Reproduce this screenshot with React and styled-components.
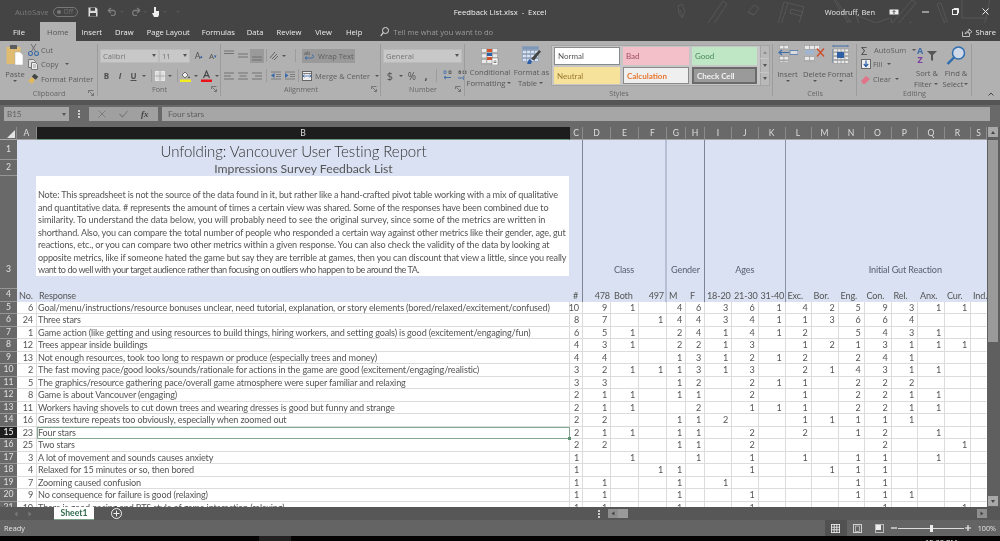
import React from "react";
import styled, { createGlobalStyle } from "styled-components";

const Global = createGlobalStyle`
  html, body { margin: 0; padding: 0; background: #000; overflow: hidden; }
  #root { width: 1000px; height: 541px; overflow: hidden; }
  * { box-sizing: border-box; }
`;

const UI = `"Open Sans", "Noto Sans", sans-serif`;
const CELL = `Lato, "Open Sans", sans-serif`;

const Window = styled.div`
  width: 1000px; height: 541px; display: flex; flex-direction: column;
  font-family: ${UI}; background: #444; filter: blur(0.35px); overflow: hidden;
`;
const Gap = styled.span`width: ${p => p.$w}px; flex: none;`;

/* ---------- title bar ---------- */
const TitleBar = styled.div`
  position: relative; height: 23px; background: #444; color: #eee; font-size: 8px;
  display: grid; grid-template-columns: 1fr auto 1fr; align-items: center;
`;
const Doodles = styled.svg`position: absolute; left: 660px; top: 0; pointer-events: none;`;
const Qat = styled.div`display: flex; align-items: center; padding-left: 15px;`;
const AutoSave = styled.span`color: #7a7a7a; font-size: 7.7px; margin-right: 4px;`;
const OffToggle = styled.span`
  display: inline-flex; align-items: center; gap: 3px; width: 25px; height: 10px; border: 1px solid #777;
  border-radius: 6px; color: #777; font-size: 6.5px; padding-left: 3px; margin-right: 10px;
  &::before { content: ""; width: 4px; height: 4px; border-radius: 50%; background: #777; }
`;
const DocTitle = styled.div`font-size: 7.7px; color: #f0f0f0; white-space: pre;`;
const TitleRight = styled.div`display: flex; align-items: center; justify-content: flex-end; z-index: 1;`;
const UserName = styled.span`font-size: 7.45px; color: #e8e8e8; margin-right: 14px;`;
const WinBtns = styled.div`display: flex; align-items: center; gap: 23px; padding-right: 11px;`;

const TabBar = styled.div`
  position: relative; height: 18px; background: #444; display: flex; align-items: flex-end; padding-left: 4px;
`;
const Tab = styled.div`
  height: 19px; display: flex; align-items: center; justify-content: center; padding: 0 ${p => p.$pad ?? 7}px;
  margin-right: ${p => p.$mr ?? 0}px;
  font-size: 7.6px; color: ${p => (p.$active ? "#555" : "#eee")}; background: ${p => (p.$active ? "#b1b1b1" : "transparent")};
  white-space: nowrap;
`;
const TellMe = styled.div`display: flex; align-items: center; gap: 4px; margin-left: 11px; height: 18px; color: #9a9a9a; font-size: 7.6px;`;
const Share = styled.div`
  margin-left: auto; height: 18px; display: flex; align-items: center; gap: 4px; padding-right: 4px; color: #eee; font-size: 7.6px;
`;

/* ---------- ribbon ---------- */
const Ribbon = styled.div`height: 59px; background: #b1b1b1; display: flex; color: #505050;`;
const Group = styled.div`
  width: ${p => p.$w}px; flex: none; display: flex; flex-direction: column; position: relative;
  &::after { content: ""; position: absolute; right: 0; top: 3px; bottom: 4px; width: 1px; background: #9c9c9c; }
`;
const GroupBody = styled.div`flex: 1; display: flex; align-items: flex-start; min-height: 0; padding-left: ${p => p.$pl ?? 0}px; gap: ${p => p.$gap ?? 0}px;`;
const GroupLabel = styled.div`height: 12px; line-height: 12px; text-align: center; font-size: 7.2px; color: #666; margin-bottom: 1px; position: relative;`;
const Launcher = styled.svg`position: absolute; right: 4px; top: 3px;`;
const Big = styled.div`
  width: ${p => p.$w}px; flex: none; display: flex; flex-direction: column; align-items: center;
  font-size: 7.6px; line-height: 10.5px; padding-top: ${p => p.$pt ?? 4}px; color: #585858; white-space: nowrap;
`;
const BigIcon = styled.div`height: ${p => p.$h ?? 26}px; display: flex; align-items: flex-start; justify-content: center;`;
const Caret = styled.span`
  display: inline-block; width: 0; height: 0; border-left: 2px solid transparent; border-right: 2px solid transparent;
  border-top: 2.5px solid #555; vertical-align: middle; margin: 0 ${p => p.$m ?? 2}px; flex: none;
`;
const SmallStack = styled.div`display: flex; flex-direction: column; padding-top: ${p => p.$pt ?? 2}px; width: ${p => (p.$w ? p.$w + "px" : "auto")}; flex: none;`;
const SmallItem = styled.div`
  height: 14.3px; display: flex; align-items: center; gap: 2px; font-size: 7.5px; color: #5e5e5e; white-space: nowrap;
`;
const Sigma = styled.span`font-size: 11px; width: 11px; flex: none; color: #444; line-height: 1;`;
const Row = styled.div`height: 15px; display: flex; align-items: center; margin-bottom: ${p => p.$mb ?? 5}px;`;
const Stack = styled.div`display: flex; flex-direction: column; padding-top: 7px; padding-left: ${p => p.$pl ?? 0}px;`;
const Combo = styled.div`
  width: ${p => p.$w}px; height: 14px; background: #c8c8c8; border: 1px solid #bbb; margin-right: ${p => p.$mr ?? 0}px;
  display: flex; align-items: center; justify-content: space-between; padding: 0 2px; font-size: 7.6px; color: #747474;
`;
const IconBtn = styled.div`
  width: ${p => p.$w ?? 14}px; height: 14px; display: flex; align-items: center; justify-content: center; flex: none;
  background: ${p => (p.$on ? "#9a9a9a" : "transparent")}; font-size: ${p => p.$fs ?? 8}px; font-weight: ${p => p.$fw ?? 400};
  font-style: ${p => (p.$it ? "italic" : "normal")}; text-decoration: ${p => (p.$ul ? "underline" : "none")}; color: #505050;
`;
const Sup = styled.sup`font-size: 5px; color: #2f5fa5;`;
const VSep = styled.span`width: 1px; height: 13px; background: #9c9c9c; margin: 0 ${p => p.$m ?? 3}px; flex: none;`;
const WrapBtn = styled.div`
  width: 53px; height: 14px; background: #9a9a9a; display: flex; align-items: center; gap: 3px; padding-left: 2px; font-size: 7.5px; color: #5e5e5e; white-space: nowrap;
`;
const MergeBtn = styled.div`display: flex; align-items: center; gap: 3px; padding-left: 2px; font-size: 7.5px; color: #5e5e5e; white-space: nowrap;`;
const Gallery = styled.div`
  width: 219px; height: 41px; margin-top: 4px; background: #c6c6c6; border: 1px solid #a4a4a4; display: flex; flex: none;
`;
const StyleGrid = styled.div`flex: 1; display: grid; grid-template-columns: 69px 69px 68px; grid-template-rows: 20px 19px; gap: 0; padding-left: 1px;`;
const StyleCell = styled.div`
  margin: 1px 2px 1px 1px; display: flex; align-items: center; padding-left: 3px; font-size: 8px; white-space: nowrap;
  background: ${p => p.$bg}; color: ${p => p.$fg}; font-weight: ${p => p.$fw ?? 400};
  border: ${p => p.$bd ?? "none"}; font-family: ${CELL};
`;
const GalleryScroll = styled.div`width: 11px; display: flex; flex-direction: column; gap: 1px; margin-left: 1px;`;
const GalleryBtn = styled.div`
  flex: 1; background: #b9b9b9; display: flex; align-items: center; justify-content: center; border-left: 1px solid #a4a4a4;
`;
const Tri = styled.span`
  width: 0; height: 0; border-left: 2.5px solid transparent; border-right: 2.5px solid transparent;
  ${p => (p.$up ? `border-bottom: 3px solid ${p.$c ?? "#555"};` : `border-top: 3px solid ${p.$c ?? "#555"};`)}
  transform: rotate(${p => p.$rot ?? 0}deg);
`;
const Collapse = styled.div`flex: 1; position: relative; display: flex; align-items: flex-end; justify-content: flex-end; padding: 0 6px 4px 0;`;

/* ---------- formula bar ---------- */
const Spacer = styled.div`height: 5px; background: #555;`;
const FormulaBar = styled.div`height: 22px; background: #696969; display: flex; align-items: flex-start; padding: 2px 10px 0 4px;`;
const NameBox = styled.div`
  width: 65px; height: 14px; background: #a6a6a6; display: flex; align-items: center; justify-content: space-between;
  padding: 0 3px; font-family: ${CELL}; font-size: 8px; color: #5e5e5e;
`;
const Dots = styled.div`width: 20px; height: 14px; display: flex; align-items: center; justify-content: center;`;
const FxBox = styled.div`
  width: 69px; height: 14px; background: #a0a0a0; display: flex; align-items: center; justify-content: space-around; padding: 0 3px;
  color: #444; font-family: "Liberation Serif", serif; font-style: italic; font-weight: 700; font-size: 9px;
`;
const FormulaInput = styled.div`
  margin-left: 4px; flex: 1; height: 14px; background: #a6a6a6; display: flex; align-items: center; padding-left: 6px;
  font-family: ${CELL}; font-size: 8.4px; color: #5e5e5e;
`;

/* ---------- sheet ---------- */
const SheetArea = styled.div`height: 380px; display: flex; background: #696969;`;
const COLS = [17, 20, 533, 13, 28, 28, 28, 19, 19, 27, 26.5, 27, 26, 27, 26, 27, 26.5, 27, 26, 16];
const Sheet = styled.div`
  width: 987px; height: 380px; overflow: hidden; display: grid; flex: none;
  grid-template-columns: ${COLS.map(c => c + "px").join(" ")};
  grid-template-rows: 13px 20px 16px 113px repeat(18, 12.5px);
  grid-auto-rows: 12.5px;
  font-family: ${CELL}; font-size: 9.1px; letter-spacing: -0.15px; color: #555; background: #fff;
`;
const Corner = styled.div`
  background: #696969; position: relative; border-right: 1px solid #8a8a8a; border-bottom: 1px solid #aaa;
  &::after { content: ""; position: absolute; right: 1px; bottom: 1px; width: 8px; height: 8px; background: #e4e4e4; clip-path: polygon(100% 0, 100% 100%, 0 100%); }
`;
const ColHead = styled.div`
  display: flex; align-items: center; justify-content: center; font-size: 8.6px; overflow: hidden;
  background: ${p => (p.$sel ? "#1d1d1d" : "#696969")}; color: #ddd; letter-spacing: 0;
  border-right: 1px solid ${p => (p.$sel ? "#1d1d1d" : "#8c8c8c")};
  border-bottom: 1px solid ${p => (p.$sel ? "#6f9a82" : "#a3a3a3")};
`;
const RowHead = styled.div`
  display: flex; align-items: ${p => (p.$end ? "flex-end" : "center")}; justify-content: center; font-size: 8.6px; line-height: 1; letter-spacing: 0;
  padding-bottom: ${p => (p.$end ? "14px" : "0")};
  background: ${p => (p.$sel ? "#1d1d1d" : "#696969")}; color: ${p => (p.$sel ? "#fff" : "#e0e0e0")};
  border-bottom: 1px solid #969696; grid-column: 1;
`;
const Blank = styled.div`background: #d9e1f2; grid-column: ${p => p.$col}; grid-row: ${p => p.$row};`;
const TitleCell = styled.div`
  grid-column: 2 / 4; grid-row: 2; background: #d9e1f2; display: flex; align-items: flex-end; justify-content: center;
  font-size: 15px; font-weight: 300; color: #333; line-height: 18px; white-space: nowrap; letter-spacing: -0.06px;
`;
const SubtitleCell = styled.div`
  grid-column: 3; grid-row: 3; background: #d9e1f2; display: flex; align-items: center; justify-content: center;
  font-size: 12.2px; color: #555; white-space: nowrap; letter-spacing: 0;
`;
const NoteCell = styled.div`grid-column: 3; grid-row: 4; background: #d9e1f2; padding: 0 1px 13px 0;`;
const NoteBox = styled.div`
  background: #fff; margin-left: -1px; height: 100px; padding: 13px 0 0 2px; color: #555; line-height: 12.5px;
  overflow: hidden;
`;
const NoteLine = styled.div`white-space: nowrap; letter-spacing: ${p => p.$ls}px;`;
const Band = styled.div`
  grid-column: ${p => p.$col}; grid-row: 2 / 5; background: #d9e1f2; display: flex; align-items: flex-end; justify-content: center;
  padding: 0 0 13px ${p => p.$pl ?? 0}px; line-height: 12.5px; color: #5a6072; white-space: nowrap; font-size: 9.1px;
  border-right: ${p => p.$edge ?? "none"};
`;
const HeadCell = styled.div`
  background: #d9e1f2; display: flex; align-items: center; overflow: hidden; white-space: nowrap; padding: 0 ${p => p.$pr ?? 1}px 0 ${p => p.$pl ?? 2}px;
  justify-content: ${p => (p.$right ? "flex-end" : "flex-start")}; border-right: ${p => p.$edge ?? "none"};
`;
const Cell = styled.div`
  display: flex; align-items: center; overflow: visible; white-space: nowrap; padding: 0 3px 0 ${p => p.$pl ?? 0}px;
  justify-content: ${p => (p.$text ? "flex-start" : "flex-end")}; background: #fff;
  border-right: 1px solid ${p => (p.$noRight ? "transparent" : "#dcdcdc")}; border-bottom: 1px solid #dcdcdc; position: relative; line-height: 1;
`;
const SelCell = styled(Cell)`
  outline: 1.5px solid #86a893; outline-offset: -1px; z-index: 2;
`;
const Handle = styled.span`position: absolute; right: -2px; bottom: -2px; width: 3px; height: 3px; background: #5f8f73;`;

const VScroll = styled.div`width: 13px; flex: none; background: #5f5f5f; display: flex; flex-direction: column; padding: 0 2px 1px 1px;`;
const ScrollBtn = styled.div`height: 10px; background: #a8a8a8; display: flex; align-items: center; justify-content: center; flex: none;`;
const VThumb = styled.div`height: 202px; margin-top: 3px; background: #9a9a9a; flex: none;`;
const Grow = styled.div`flex: 1;`;

/* ---------- bottom ---------- */
const SheetTabs = styled.div`height: 13px; background: #575757; display: flex; align-items: stretch;`;
const NavArrows = styled.div`width: 54px; display: flex; align-items: center; gap: 10px; padding-left: 14px;`;
const SheetTab = styled.div`
  width: 40px; background: #fff; color: #2f6b4c; font-weight: 700; font-family: ${CELL}; font-size: 8.6px;
  display: flex; align-items: center; justify-content: center; border-bottom: 1px solid #7da08b;
`;
const AddSheet = styled.div`margin-left: 17px; display: flex; align-items: center;`;
const TabDots = styled.div`margin-left: 473px; width: 8px; display: flex; align-items: center; justify-content: center;`;
const HScroll = styled.div`flex: 1; display: flex; align-items: center; padding: 0 13px 0 5px;`;
const HBtn = styled.div`width: 10px; height: 9px; background: #8f8f8f; display: flex; align-items: center; justify-content: center;`;
const HThumb = styled.div`width: 10px; height: 9px; background: #9a9a9a;`;
const StatusBar = styled.div`height: 16px; background: #646464; display: flex; align-items: center; padding-left: 4px; color: #e4e4e4; font-size: 7.4px;`;
const ViewBtns = styled.div`margin-left: auto; display: flex; align-items: center; height: 16px;`;
const ViewBtn = styled.div`
  width: 22px; height: 16px; display: flex; align-items: center; justify-content: center; background: ${p => (p.$on ? "#515151" : "transparent")};
`;
const Zoom = styled.div`display: flex; align-items: center; margin-left: 0; gap: 1px; padding-right: 4px;`;
const ZoomTrack = styled.div`width: 66px; height: 1px; background: #ddd; position: relative;`;
const ZoomThumb = styled.span`position: absolute; left: 32px; top: -3px; width: 3px; height: 7px; background: #eee;`;
const ZoomPct = styled.span`font-size: 7.2px; color: #e4e4e4; margin-left: 6px;`;
const Taskbar = styled.div`height: 5px; background: #030303; display: flex; overflow: hidden; position: relative;`;
const TaskApp = styled.div`margin-left: 259px; width: 32px; background: #222; height: 5px; flex: none;`;
const Clock = styled.div`margin-left: 634px; padding-top: 1px; color: #eee; font-size: 7.5px; line-height: 10px; white-space: nowrap;`;

/* ---------- icons ---------- */
const Svg = styled.svg`display: block; flex: none;`;
const S = ({ w, h, children, ...r }) => <Svg width={w} height={h} viewBox={`0 0 ${w} ${h}`} fill="none" {...r}>{children}</Svg>;

const SaveIcon = () => <S w={10} h={10}><path d="M0.5 0.5h7.5l1.5 1.5v7.5h-9z" fill="#ddd"/><rect x="2.5" y="0.8" width="4.5" height="3" fill="#444"/><rect x="2" y="6" width="6" height="3.4" fill="#444"/></S>;
const UndoIcon = ({ flip }) => <S w={11} h={9}><g transform={flip ? "translate(11 0) scale(-1 1)" : undefined}><path d="M1 3.5h6a3 3 0 0 1 0 5H4M1 3.5l3-2.5M1 3.5l3 2.5" stroke="#7c7c7c" strokeWidth="1.3"/></g></S>;
const TouchIcon = () => <S w={9} h={12}><path d="M3 1h2v4h3v4l-1 2H3L1 7l2 0z" fill="#eee"/></S>;
const Search = () => <S w={9} h={10}><circle cx="5.5" cy="3.5" r="3" stroke="#ddd"/><path d="M3.3 5.7L0.7 9" stroke="#ddd" strokeWidth="1.2"/></S>;

const PasteIcon = () => <S w={18} h={21}><rect x="0.5" y="2" width="14" height="17" fill="#e0bc72"/><rect x="4" y="0" width="7" height="4" fill="#5d5d5d"/><path d="M9 7h5l3 3v10H9z" fill="#fff" stroke="#aaa" strokeWidth=".5"/></S>;
const CutIcon = () => <S w={11} h={12}><path d="M3 0l5 8M8 0L3 8" stroke="#6c6c6c"/><circle cx="2.5" cy="9.5" r="2" stroke="#3e6ca8" strokeWidth="1.1"/><circle cx="8.5" cy="9.5" r="2" stroke="#3e6ca8" strokeWidth="1.1"/></S>;
const CopyIcon = () => <S w={11} h={11}><path d="M.5.5h5l2 2v6h-7z" fill="#ddd" stroke="#777"/><path d="M3.5 3.5h4l2 2v5h-6z" fill="#eee" stroke="#777"/><path d="M5 6h3M5 8h3" stroke="#777" strokeWidth=".7"/></S>;
const BrushIcon = () => <S w={11} h={10}><path d="M0 7l4-4 3 3-3 4z" fill="#e0b860"/><rect x="5" y="0.5" width="5" height="4" transform="rotate(40 7 2)" fill="#444"/></S>;
const Launch = () => <Launcher width="6" height="6" viewBox="0 0 6 6" fill="none"><path d="M.5 3V.5H5.5M1.5 1.5L5.5 5.5M5.5 3v2.5H3" stroke="#666" strokeWidth=".8"/></Launcher>;
const BorderIcon = () => <S w={10} h={10}><rect x=".5" y=".5" width="9" height="9" fill="#ddd" stroke="#e8e8e8"/><path d="M5 0v10M0 5h10" stroke="#999" strokeWidth=".7"/></S>;
const FillIcon = () => <S w={11} h={12}><path d="M2 5l3-3 3 3-3 3z" fill="#eee" stroke="#555" strokeWidth=".8"/><path d="M9 6l1 2H8z" fill="#444"/><rect x="0" y="9.5" width="11" height="2.5" fill="#f5ec1f"/></S>;
const FontColorIcon = () => <S w={11} h={12}><path d="M2.5 8L5.5 1l3 7M3.8 5.6h3.4" stroke="#444" strokeWidth="1.1"/><rect x="0" y="9.5" width="11" height="2.5" fill="#e8141a"/></S>;
const Lines = ({ y = 3, a = [10, 10, 10], al = "l", gap = 3, c = "#6c6c6c" }) => (
  <S w={10} h={12}>{a.map((n, i) => { const x = al === "l" ? 0 : al === "r" ? 10 - n : (10 - n) / 2; return <path key={i} d={`M${x} ${y + i * gap}h${n}`} stroke={c} strokeWidth=".9"/>; })}</S>
);
const Orient = () => <S w={10} h={10}><path d="M1 7L6 1M3 8L8 3M5 9l4-4" stroke="#666"/></S>;
const IndentL = () => <S w={10} h={9}><path d="M0 1h10M5 3.5h5M5 5.5h5M0 8h10" stroke="#777" strokeWidth=".9"/><path d="M0 4.5L3.5 2v5z" fill="#386aa8"/></S>;
const IndentR = () => <S w={10} h={9}><path d="M0 1h10M5 3.5h5M5 5.5h5M0 8h10" stroke="#777" strokeWidth=".9"/><path d="M3.5 4.5L0 2v5z" fill="#386aa8"/></S>;
const WrapIcon = () => <S w={11} h={11}><text x="0" y="5" fontSize="5.5" fill="#555" fontFamily="Open Sans">ab</text><path d="M1 8h7a1 1 0 0 0 0-3M3 6.5L1 8l2 1.5" stroke="#386aa8" strokeWidth=".9"/></S>;
const MergeIcon = () => <S w={10} h={10}><rect x=".5" y=".5" width="9" height="9" fill="#eee" stroke="#666"/><path d="M1 5h8M2.5 3.5L1 5l1.5 1.5M7.5 3.5L9 5 7.5 6.5" stroke="#386aa8" strokeWidth=".8"/><path d="M0 2.5h10" stroke="#666" strokeWidth=".8"/></S>;
const DecUp = () => <S w={11} h={11}><rect x="7" y="1" width="2" height="2.6" stroke="#444" strokeWidth=".7"/><path d="M9 7.5H2M4 5.8L2 7.5l2 1.7" stroke="#386aa8" strokeWidth=".9"/><rect x="2" y="1" width="2" height="2.6" stroke="#386aa8" strokeWidth=".7"/></S>;
const DecDn = () => <S w={11} h={11}><rect x="7" y="1" width="3" height="2.6" stroke="#444" strokeWidth=".7"/><path d="M2 8h7M7 6.3L9 8l-2 1.7" stroke="#386aa8" strokeWidth=".9"/><rect x="3" y="1" width="1.5" height="2.6" stroke="#444" strokeWidth=".7"/></S>;
const GridCells = ({ x, y, nx, ny, s, c = "#999", fill = "#eaeaea" }) => (
  <g>{Array.from({ length: nx * ny }, (_, i) => <rect key={i} x={x + (i % nx) * s + .5} y={y + Math.floor(i / nx) * s + .5} width={s} height={s * .75} fill={fill} stroke={c} strokeWidth=".6"/>)}</g>
);
const CondIcon = () => <S w={18} h={17}><GridCells x={0} y={0} nx={3} ny={4} s={5.4}/><rect x="6" y="1" width="5" height="3" fill="#d2532c"/><rect x="6" y="5" width="5" height="3" fill="#2f5fa5"/><rect x="6" y="9" width="5" height="3" fill="#d2532c"/><rect x="11" y="10" width="6" height="7" fill="#fff" stroke="#777" strokeWidth=".6"/><path d="M12.5 13h3M12.5 14.5h3" stroke="#444" strokeWidth=".7"/></S>;
const TableIcon = () => <S w={20} h={19}><GridCells x={0} y={0} nx={4} ny={4} s={4} c="#8098b8" fill="#d9e2f0"/><rect x="0.5" y="0.5" width="16" height="3" fill="#8098b8"/><path d="M9 13L17 4l2 1.5-7 9z" fill="#444"/><path d="M7 13l3 2-1 3H5z" fill="#2f5fa5"/></S>;
const InsertIcon = () => <S w={20} h={17}><GridCells x={1} y={0} nx={2} ny={1} s={4.5}/><GridCells x={1} y={11} nx={2} ny={2} s={4.5}/><rect x="12" y="5.5" width="8" height="4" fill="#dcdcdc" stroke="#3e6ca8" strokeWidth=".7"/><path d="M11 7.5H1M4 5L1 7.5 4 10" stroke="#3e6ca8" strokeWidth="1.2"/></S>;
const DeleteIcon = () => <S w={21} h={17}><GridCells x={0} y={0} nx={3} ny={1} s={5}/><GridCells x={0} y={11} nx={2} ny={2} s={5}/><rect x="1" y="5" width="9" height="4.5" fill="#9fb4cf"/><path d="M13 3.5l7 8M20 3.5l-7 8" stroke="#d24a2a" strokeWidth="1.3"/></S>;
const FormatIcon = () => <S w={18} h={19}><path d="M1 1h15" stroke="#3e6ca8"/><path d="M1 0v2M16 0v2M0 4v14" stroke="#3e6ca8" strokeWidth=".8"/><GridCells x={1} y={3.5} nx={4} ny={4} s={3.8}/><rect x="5" y="7" width="7" height="6" fill="#2f5fa5"/></S>;
const FillDown = () => <S w={10} h={10}><rect x=".5" y=".5" width="9" height="9" fill="#eee" stroke="#666"/><path d="M5 1.5v6M2.8 5L5 7.5 7.2 5" stroke="#2f5fa5" strokeWidth="1.2"/></S>;
const EraseIcon = () => <S w={10} h={10}><path d="M0 7l5-5 4 3-5 5H2z" fill="#e0758a"/></S>;
const SortIcon = () => <S w={20} h={18}><text x="0" y="7.5" fontSize="9" fontWeight="700" fill="#3e6ca8" fontFamily="Open Sans">A</text><text x="0.5" y="17" fontSize="9" fontWeight="700" fill="#7c3fa0" fontFamily="Open Sans">Z</text><path d="M10 5h10l-4 4v6l-2-1V9z" fill="#555"/></S>;
const FindIcon = () => <S w={20} h={19}><circle cx="12.5" cy="7" r="6" fill="#cfd9e8" stroke="#2e6db0" strokeWidth="1.5"/><path d="M8 11.5L1.5 18" stroke="#2e6db0" strokeWidth="2.4"/></S>;
const X = () => <S w={8} h={8}><path d="M.5.5l7 7M7.5.5l-7 7" stroke="#7c7c7c"/></S>;
const Check = () => <S w={9} h={8}><path d="M.5 4l3 3 5-6" stroke="#7c7c7c" strokeWidth="1.1"/></S>;
const VDots = () => <S w={2} h={8}><path d="M1 0v2M1 3v2M1 6v2" stroke="#e8e8e8" strokeWidth="1.6"/></S>;

const GridView = () => <S w={9} h={9}><path d="M0 .5h9M0 3.2h9M0 5.8h9M0 8.5h9M.5 0v9M3.2 0v9M5.8 0v9M8.5 0v9" stroke="#e8e8e8" strokeWidth=".9"/></S>;
const PageView = () => <S w={9} h={9}><rect x=".5" y=".5" width="8" height="8" stroke="#d0d0d0"/><rect x="2.5" y="2" width="4" height="5.5" stroke="#d0d0d0" strokeWidth=".7"/></S>;
const BreakView = () => <S w={9} h={9}><rect x=".5" y=".5" width="8" height="8" stroke="#bbb"/><rect x="1" y="1" width="5" height="5" fill="#eee"/></S>;

const DoodleArt = () => (
  <Doodles width="340" height="41" viewBox="0 0 340 41" fill="none" stroke="#565656" strokeWidth="1">
    <path d="M18 6l4-2 3 8-3 6-3-5zM20 10l3 6"/>
    <path d="M63 1l-21 31 5 2 20-30zM42 32l-1 2"/>
    <path d="M94 5l5 3-5 7-6-3zM88 12l6 3"/>
    <path d="M124 2l20 5-8 26-19-5zM128 3l-8 25M131 9l12 3-2 4-11-3z"/>
    <path d="M176 0l20 30-2 2-20-32M190 20l-5 4"/>
    <path d="M196 15l5 15 32 2 -2-14M196 15l20 8 14-5M216 23l0 9"/>
    <path d="M252 0l-24 28-1 5 5-2 24-28z"/>
    <path d="M250 22l6 4 3 7-3 1-6-6z"/>
    <path d="M277 4l4-1 9 28-2 1zM284 20l3 12"/>
    <path d="M302 0v18l26 0M330 0l-8 35"/>
  </Doodles>
);

/* ---------- data ---------- */
const NOTE = [
  ["Note: This spreadsheet is not the source of the data found in it, but rather like a hand-crafted pivot table working with a mix of qualitative", -0.18],
  ["and quantitative data. # represents the amount of times a certain view was shared. Some of the responses have been combined due to", -0.17],
  ["similarity. To understand the data below, you will probably need to see the original survey, since some of the metrics are written in", -0.06],
  ["shorthand. Also, you can compare the total number of people who responded a certain way against other metrics like their gender, age, gut", -0.16],
  ["reactions, etc., or you can compare two other metrics within a given response. You can also check the validity of the data by looking at", -0.14],
  ["opposite metrics, like if someone hated the game but say they are terrible at games, then you can discount that view a little, since you really", -0.17],
  ["want to do well with your target audience rather than focusing on outliers who happen to be around the TA.", -0.44],
];
const LETTERS = "ABCDEFGHIJKLMNOPQRS".split("");
const HEADS = [
  ["No.", 2, 0], ["Response", 2, 0], ["#", 3, 0, "c"], ["478", 0, 1, "r"], ["Both", 3], ["497", 0, 1, "r"], ["M", 2], ["F", 4],
  ["18-20", 2], ["21-30", 2], ["31-40", 2], ["Exc.", 2], ["Bor.", 2], ["Eng.", 2], ["Con.", 2], ["Rel.", 2], ["Anx.", 2], ["Cur.", 2], ["Ind.", 2],
];
const EDGE = { 3: "1.5px solid #7d8494", 6: "2px solid #b7bfd6", 8: "1.5px solid #7d8494", 11: "1.5px solid #8b92a4" };
const ROWS = [
  [6, "Goal/menu/instructions/resource bonuses unclear, need tutorial, explanation, or story elements (bored/relaxed/excitement/confused)", "10,9,1,,4,6,3,6,1,4,2,5,9,3,1,1,"],
  [24, "Three stars", "8,7,,1,4,4,3,4,1,1,3,6,6,4,,,"],
  [1, "Game action (like getting and using resources to build things, hiring workers, and setting goals) is good (excitement/engaging/fun)", "6,5,1,,2,4,1,4,1,2,,5,4,3,1,,"],
  [12, "Trees appear inside buildings", "4,3,1,,2,2,1,3,,1,2,1,3,1,1,1,"],
  [13, "Not enough resources, took too long to respawn or produce (especially trees and money)", "4,4,,,1,3,1,2,1,2,,2,4,1,,,"],
  [2, "The fast moving pace/good looks/sounds/rationale for actions in the game are good (excitement/engaging/realistic)", "3,2,1,1,1,3,1,3,,2,1,4,3,1,1,,"],
  [5, "The graphics/resource gathering pace/overall game atmosphere were super familiar and relaxing", "3,3,,,1,2,,2,1,1,,2,2,2,,,"],
  [8, "Game is about Vancouver (engaging)", "2,1,1,,1,1,,2,,1,,2,2,1,1,,"],
  [11, "Workers having shovels to cut down trees and wearing dresses is good but funny and strange", "2,1,1,,,2,,1,1,1,,2,2,1,1,,"],
  [16, "Grass texture repeats too obviously, especially when zoomed out", "2,2,,,1,1,2,,,1,1,1,1,1,,,"],
  [23, "Four stars", "2,1,1,,1,1,,2,,2,,1,2,,1,,"],
  [25, "Two stars", "2,2,,,1,1,,2,,,,,2,,,1,"],
  [3, "A lot of movement and sounds causes anxiety", "1,,1,,,1,,1,,1,,1,1,,1,,"],
  [4, "Relaxed for 15 minutes or so, then bored", "1,,,1,1,,,1,,,1,1,1,,,,"],
  [7, "Zooming caused confusion", "1,1,,,1,,1,,,,,1,1,,,,"],
  [9, "No consequence for failure is good (relaxing)", "1,1,,,1,,,1,,,,1,1,1,,,"],
  [10, "There is good pacing and RTS style of game interaction (relaxing)", "1,1,,,1,,,1,,,,,1,,,1,"],
];

const TABS = [["File", 9, false, 6], ["Home", 7, true], ["Insert", 6], ["Draw", 7], ["Page Layout", 6], ["Formulas", 6], ["Data", 6], ["Review", 7], ["View", 7], ["Help", 7]];

const STYLES = [
  ["Normal", "#fff", "#555", 400, "1.5px solid #8a8a8a"],
  ["Bad", "#f3bfc8", "#a05060", 400],
  ["Good", "#bfe6c5", "#4a8a58", 400],
  ["Neutral", "#f6e29b", "#9a7a30", 400],
  ["Calculation", "#efefef", "#e8772e", 700, "1px solid #8a8a8a"],
  ["Check Cell", "#9a9a9a", "#f2f2f2", 700, "2px solid #6a6a6a"],
];

export default function App() {
  return (
    <Window>
      <Global />
      <TitleBar>
        <DoodleArt />
        <Qat>
          <AutoSave>AutoSave</AutoSave>
          <OffToggle>Off</OffToggle>
          <SaveIcon />
          <Gap $w={9} />
          <UndoIcon /><Caret $m={2} />
          <Gap $w={4} />
          <UndoIcon flip /><Caret $m={2} />
          <Gap $w={2} />
          <TouchIcon /><Caret $m={3} />
          <Gap $w={6} />
          <Caret $m={0} />
        </Qat>
        <DocTitle>Feedback List.xlsx  -  Excel</DocTitle>
        <TitleRight>
          <UserName>Woodruff, Ben</UserName>
          <WinBtns>
            <S w={10} h={6}><rect x=".5" y=".5" width="9" height="5" fill="#eee"/><path d="M5 5V2M3.5 3L5 1.5 6.5 3" stroke="#444" strokeWidth=".9"/></S>
            <S w={7} h={2}><path d="M0 1h7" stroke="#eee"/></S>
            <S w={7} h={7}><rect x=".5" y="1.5" width="5" height="5" stroke="#eee"/><path d="M2 1.5V.5h4.5V5H5.5" stroke="#eee"/></S>
            <S w={7} h={7}><path d="M.5.5l6 6M6.5.5l-6 6" stroke="#eee"/></S>
          </WinBtns>
        </TitleRight>
      </TitleBar>

      <TabBar>
        {TABS.map(([t, pad, a, mr]) => <Tab key={t} $pad={pad} $active={a} $mr={mr}>{t}</Tab>)}
        <TellMe><Search />Tell me what you want to do</TellMe>
        <Share>
          <S w={10} h={9}><path d="M.5 3.5v5h7V6M3 6c.5-2 2-3 4-3V1l3 2.7L7 6V4.4C5.5 4.4 4 5 3 6z" stroke="#ddd" strokeWidth=".8"/></S>
          Share
        </Share>
      </TabBar>

      <Ribbon>
        <Group $w={98}>
          <GroupBody $pl={5} $gap={3}>
            <Big $w={20} $pt={4}>
              <BigIcon $h={24}><PasteIcon /></BigIcon>
              Paste
              <Caret />
            </Big>
            <SmallStack>
              <SmallItem><CutIcon />Cut</SmallItem>
              <SmallItem><CopyIcon />Copy <Caret $m={4} /></SmallItem>
              <SmallItem><BrushIcon />Format Painter</SmallItem>
            </SmallStack>
          </GroupBody>
          <GroupLabel>Clipboard<Launch /></GroupLabel>
        </Group>

        <Group $w={123}>
          <Stack $pl={2}>
            <Row>
              <Combo $w={59}>Calibri<Tri $c="#555" /></Combo>
              <Combo $w={31} $mr={2}>11<Tri $c="#555" /></Combo>
              <IconBtn $fs={9}>A<Sup>▴</Sup></IconBtn>
              <IconBtn $fs={8}>A<Sup>▾</Sup></IconBtn>
            </Row>
            <Row $mb={0}>
              <IconBtn $fw={700} $w={13} $fs={8}>B</IconBtn>
              <IconBtn $it $fw={700} $w={14} $fs={8}>I</IconBtn>
              <IconBtn $ul $fw={700} $w={13} $fs={8}>U</IconBtn>
              <Caret />
              <VSep />
              <BorderIcon /><Caret $m={3} />
              <VSep $m={2} />
              <FillIcon /><Caret $m={3} />
              <FontColorIcon /><Caret $m={3} />
            </Row>
          </Stack>
          <GroupLabel>Font<Launch /></GroupLabel>
        </Group>

        <Group $w={160}>
          <Stack $pl={1}>
            <Row>
              <IconBtn><Lines y={1} gap={2.5} a={[10, 10]} /></IconBtn>
              <IconBtn><Lines y={4} gap={3} a={[10, 10]} /></IconBtn>
              <IconBtn $on><Lines y={7} gap={3} a={[10, 10]} /></IconBtn>
              <VSep $m={2} />
              <Orient /><Caret $m={3} />
              <VSep $m={6} />
              <WrapBtn><WrapIcon />Wrap Text</WrapBtn>
            </Row>
            <Row $mb={0}>
              <IconBtn><Lines a={[10, 7, 10]} /></IconBtn>
              <IconBtn><Lines a={[10, 7, 10]} al="c" /></IconBtn>
              <IconBtn><Lines a={[10, 7, 10]} al="r" /></IconBtn>
              <VSep $m={2} />
              <IconBtn><IndentL /></IconBtn>
              <IconBtn><IndentR /></IconBtn>
              <VSep $m={1} />
              <MergeBtn><MergeIcon />Merge &amp; Center</MergeBtn>
              <Caret $m={5} />
            </Row>
          </Stack>
          <GroupLabel>Alignment<Launch /></GroupLabel>
        </Group>

        <Group $w={84}>
          <Stack $pl={2}>
            <Row>
              <Combo $w={79}>General<Tri $c="#555" /></Combo>
            </Row>
            <Row $mb={0}>
              <IconBtn $fs={11}>$</IconBtn><Caret />
              <IconBtn $fs={10}>%</IconBtn>
              <IconBtn $fs={11} $fw={700}>,</IconBtn>
              <VSep $m={3} />
              <IconBtn><DecUp /></IconBtn>
              <IconBtn><DecDn /></IconBtn>
            </Row>
          </Stack>
          <GroupLabel>Number<Launch /></GroupLabel>
        </Group>

        <Group $w={308}>
          <GroupBody $pl={1}>
            <Big $w={48} $pt={7}>
              <BigIcon $h={19}><CondIcon /></BigIcon>
              Conditional
              <span>Formatting<Caret /></span>
            </Big>
            <Big $w={35} $pt={5}>
              <BigIcon $h={21}><TableIcon /></BigIcon>
              Format as
              <span>Table<Caret /></span>
            </Big>
            <Gap $w={2} />
            <Gallery>
              <StyleGrid>
                {STYLES.map(([t, bg, fg, fw, bd]) => <StyleCell key={t} $bg={bg} $fg={fg} $fw={fw} $bd={bd}>{t}</StyleCell>)}
              </StyleGrid>
              <GalleryScroll>
                <GalleryBtn><Tri $up $c="#8f8f8f" /></GalleryBtn>
                <GalleryBtn><Tri /></GalleryBtn>
                <GalleryBtn><Tri /></GalleryBtn>
              </GalleryScroll>
            </Gallery>
          </GroupBody>
          <GroupLabel>Styles</GroupLabel>
        </Group>

        <Group $w={84}>
          <GroupBody $pl={1}>
            <Big $w={27}>
              <BigIcon $h={24}><InsertIcon /></BigIcon>
              Insert
              <Caret />
            </Big>
            <Big $w={27}>
              <BigIcon $h={24}><DeleteIcon /></BigIcon>
              Delete
              <Caret />
            </Big>
            <Big $w={25}>
              <BigIcon $h={24}><FormatIcon /></BigIcon>
              Format
              <Caret />
            </Big>
          </GroupBody>
          <GroupLabel>Cells</GroupLabel>
        </Group>

        <Group $w={115}>
          <GroupBody $pl={4}>
            <SmallStack $w={51}>
              <SmallItem><Sigma>Σ</Sigma>AutoSum <Caret $m={4} /></SmallItem>
              <SmallItem><FillDown />Fill <Caret /></SmallItem>
              <SmallItem><EraseIcon />Clear <Caret /></SmallItem>
            </SmallStack>
            <Big $w={30} $pt={5}>
              <BigIcon $h={22}><SortIcon /></BigIcon>
              Sort &amp;
              <span>Filter<Caret /></span>
            </Big>
            <Big $w={28} $pt={5}>
              <BigIcon $h={22}><FindIcon /></BigIcon>
              Find &amp;
              <span>Select<Caret $m={1} /></span>
            </Big>
          </GroupBody>
          <GroupLabel>Editing</GroupLabel>
        </Group>

        <Collapse>
          <S w={6} h={4}><path d="M.5 3.5L3 1l2.5 2.5" stroke="#444"/></S>
        </Collapse>
      </Ribbon>

      <Spacer />

      <FormulaBar>
        <NameBox>B15<Tri /></NameBox>
        <Dots><VDots /></Dots>
        <FxBox><X /><Check /><span>fx</span></FxBox>
        <FormulaInput>Four stars</FormulaInput>
      </FormulaBar>

      <SheetArea>
        <Sheet>
          <Corner />
          {LETTERS.map(l => <ColHead key={l} $sel={l === "B"}>{l}</ColHead>)}

          <RowHead>1</RowHead>
          <RowHead>2</RowHead>
          <RowHead $end>3</RowHead>
          <TitleCell>Unfolding: Vancouver User Testing Report</TitleCell>
          <Blank $col={2} $row={3} />
          <SubtitleCell>Impressions Survey Feedback List</SubtitleCell>
          <Blank $col={2} $row={4} />
          <NoteCell>
            <NoteBox>{NOTE.map(([l, ls], i) => <NoteLine key={i} $ls={ls}>{l}</NoteLine>)}</NoteBox>
          </NoteCell>
          <Band $col="4" $edge={EDGE[3]} />
          <Band $col="5 / 8" $edge={EDGE[6]}>Class</Band>
          <Band $col="8 / 10" $edge={EDGE[8]}>Gender</Band>
          <Band $col="10 / 13" $edge={EDGE[11]}>Ages</Band>
          <Band $col="13 / 21" $pl={38}>Initial Gut Reaction</Band>

          <RowHead>4</RowHead>
          {HEADS.map(([t, pl, pr, mode], i) => (
            <HeadCell key={i} $pl={pl} $pr={pr} $right={mode === "r"} $edge={EDGE[i + 1]}>{t}</HeadCell>
          ))}

          {ROWS.map(([no, text, vals], r) => {
            const Text = r === 10 ? SelCell : Cell;
            return (
              <React.Fragment key={r}>
                <RowHead $sel={r === 10}>{r + 5}</RowHead>
                <Cell>{no}</Cell>
                <Text $text $pl={1}>{text}{r === 10 && <Handle />}</Text>
                {vals.split(",").map((v, i) => <Cell key={i} $noRight={i === 16}>{v}</Cell>)}
              </React.Fragment>
            );
          })}
        </Sheet>
        <VScroll>
          <ScrollBtn><Tri $up $c="#444" /></ScrollBtn>
          <VThumb />
          <Grow />
          <ScrollBtn><Tri $c="#444" /></ScrollBtn>
        </VScroll>
      </SheetArea>

      <SheetTabs>
        <NavArrows>
          <S w={4} h={6}><path d="M3.5.5L.5 3l3 2.5z" fill="#7a7a7a"/></S>
          <S w={4} h={6}><path d="M.5.5L3.5 3l-3 2.5z" fill="#7a7a7a"/></S>
        </NavArrows>
        <SheetTab>Sheet1</SheetTab>
        <AddSheet>
          <S w={11} h={11}><circle cx="5.5" cy="5.5" r="5" stroke="#eee"/><path d="M5.5 2.5v6M2.5 5.5h6" stroke="#eee"/></S>
        </AddSheet>
        <TabDots><VDots /></TabDots>
        <HScroll>
          <HBtn><Tri $c="#444" $rot={90} /></HBtn>
          <HThumb />
          <Grow />
          <HBtn><Tri $c="#444" $rot={-90} /></HBtn>
        </HScroll>
      </SheetTabs>

      <StatusBar>
        Ready
        <ViewBtns>
          <ViewBtn $on><GridView /></ViewBtn>
          <ViewBtn><PageView /></ViewBtn>
          <ViewBtn><BreakView /></ViewBtn>
          <Zoom>
            <S w={6} h={2}><path d="M0 1h6" stroke="#eee" strokeWidth="1.2"/></S>
            <ZoomTrack><ZoomThumb /></ZoomTrack>
            <S w={6} h={6}><path d="M0 3h6M3 0v6" stroke="#eee" strokeWidth="1.2"/></S>
            <ZoomPct>100%</ZoomPct>
          </Zoom>
        </ViewBtns>
      </StatusBar>
      <Taskbar>
        <TaskApp />
        <Clock>12:38 PM</Clock>
      </Taskbar>
    </Window>
  );
}
